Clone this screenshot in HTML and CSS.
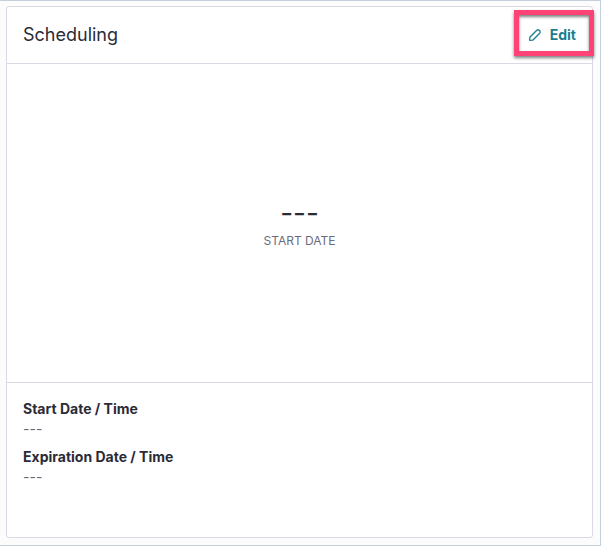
FILE: index.html
```html
<!DOCTYPE html>
<html lang="en">
<head>
<meta charset="utf-8">
<title>Scheduling</title>
<link rel="stylesheet" href="styles.css">
</head>
<body>
<main class="page">
  <section class="card">
    <header class="card-header">
      <h1 class="title">Scheduling</h1>
      <button class="edit" type="button">
        <svg class="edit-icon" viewBox="0 0 14 14" aria-hidden="true">
          <path d="M1.7 12.3 L1.8 9.3 L8.8 2.3 Q10 1.2 11.2 2.3 L11.7 2.8 Q12.8 4 11.7 5.2 L4.7 12.2 Z"/>
        </svg>
        Edit
      </button>
    </header>
    <div class="summary">
      <div class="summary-value">---</div>
      <div class="summary-label">START DATE</div>
    </div>
    <dl class="details">
      <div class="detail">
        <dt>Start Date / Time</dt>
        <dd>---</dd>
      </div>
      <div class="detail">
        <dt>Expiration Date / Time</dt>
        <dd>---</dd>
      </div>
    </dl>
  </section>
</main>
</body>
</html>
```
FILE: styles.css
```css
* {
  box-sizing: border-box;
}

body {
  margin: 0;
  background: #fff;
  color: #2b2b36;
  font-family: Inter, "Liberation Sans", sans-serif;
}

.page {
  display: flex;
  min-height: 100vh;
  margin-right: 5px;
  padding: 5px 7px 7px 6px;
  background: #fcfcfd;
  border: 1px solid #c3d0db;
  border-left: 0;
}

.card {
  display: flex;
  flex: 1;
  flex-direction: column;
  background: #fff;
  border: 1px solid #d9dae5;
  border-radius: 3px;
}

.card-header {
  display: flex;
  align-items: center;
  justify-content: space-between;
  height: 57px;
  padding: 0 16px;
  border-bottom: 1px solid #d9dae5;
}

.title {
  margin: 0;
  font-size: 18px;
  font-weight: 400;
  line-height: 24px;
}

.edit {
  position: relative;
  display: flex;
  align-items: center;
  gap: 8px;
  padding: 0;
  color: #1b7f8e;
  background: none;
  border: 0;
  font: 700 14px/20px Inter, "Liberation Sans", sans-serif;
  cursor: pointer;
}

/* Highlight frame around the button */
.edit::after {
  content: "";
  position: absolute;
  inset: -15px -18px -11px -14px;
  border: 5px solid #ff4377;
  box-shadow: 0 2px 3px rgba(0, 0, 0, 0.5), inset 0 2px 3px rgba(0, 0, 0, 0.5);
}

.edit-icon {
  width: 14px;
  height: 14px;
  fill: none;
  stroke: currentColor;
  stroke-width: 1.3;
  stroke-linejoin: round;
}

.summary {
  display: flex;
  flex: 1;
  flex-direction: column;
  align-items: center;
  justify-content: center;
  border-bottom: 1px solid #d9dae5;
}

.summary-value {
  font-size: 28px;
  line-height: 36px;
}

.summary-label {
  color: #6b6c7b;
  font-size: 12px;
  line-height: 20px;
}

.details {
  min-height: 154px;
  margin: 0;
  padding: 16px;
}

.detail {
  margin-bottom: 8px;
  font-size: 14px;
  line-height: 20px;
}

.detail dt {
  font-weight: 700;
}

.detail dd {
  margin: 0;
  color: #6b6c7b;
}
```
